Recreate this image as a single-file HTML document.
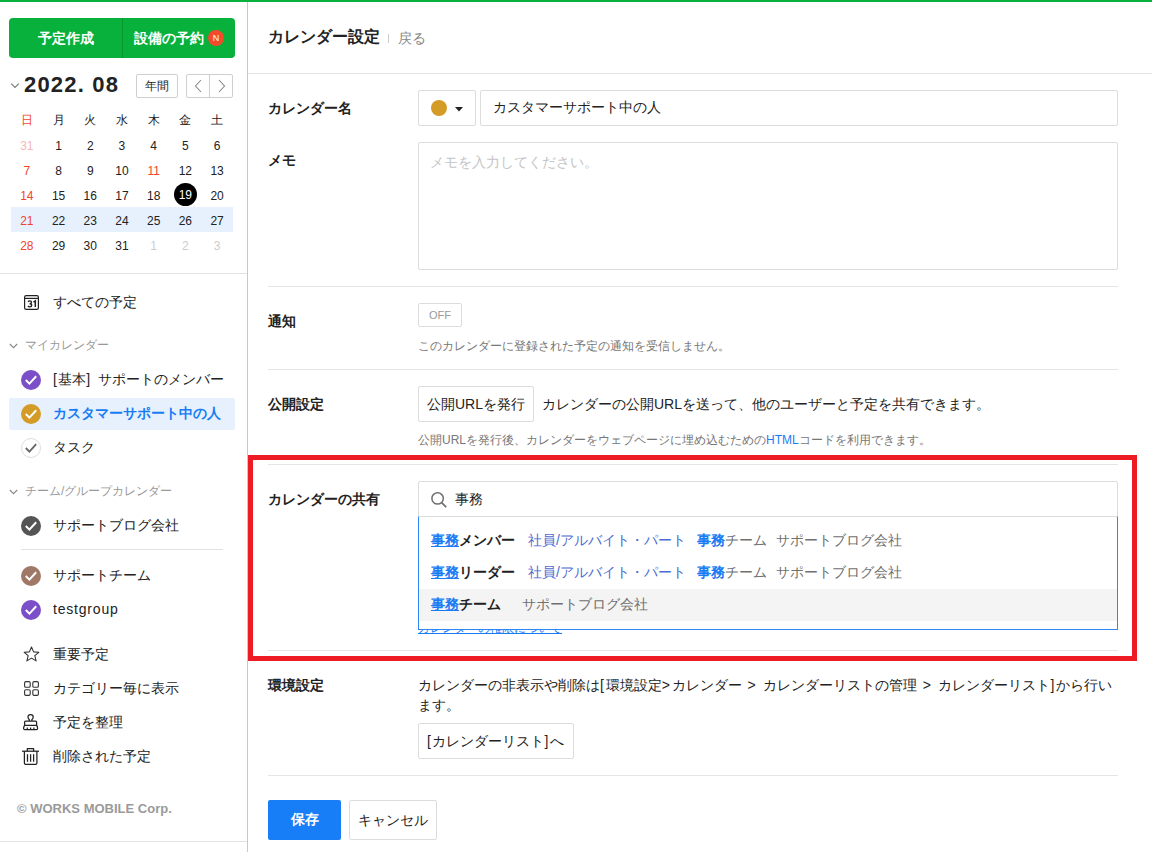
<!DOCTYPE html>
<html lang="ja">
<head>
<meta charset="utf-8">
<style>
*{box-sizing:border-box;margin:0;padding:0}
html,body{width:1152px;height:852px;overflow:hidden;background:#fff}
body{position:relative;font-family:"Liberation Sans",sans-serif;color:#222;font-size:14px}
.a{position:absolute}
.topbar{left:0;top:0;width:1152px;height:2px;background:#08b13b}
.sideborder{left:247px;top:2px;width:1px;height:850px;background:#c9c9c9}
/* sidebar */
.btns{left:9px;top:18px;width:226px;height:40px;background:#08b13b;border-radius:4px}
.btns .div{left:113px;top:0;width:1px;height:40px;background:#06972f}
.btxt{color:#fff;font-weight:bold;font-size:14px;line-height:40px;white-space:nowrap}
.badge{left:199px;top:12px;width:16px;height:16px;border-radius:50%;background:#f44a2c;color:#fff;font-size:9px;line-height:16px;text-align:center}
.year{left:24px;top:72px;font-size:22px;font-weight:bold;line-height:26px;color:#222;white-space:nowrap;letter-spacing:1.2px}
.sbtn{border:1px solid #cfcfcf;border-radius:2px;background:#fff}
.cal{left:11px;top:107px;width:222px}
.cal .row{position:relative;height:25px;display:flex}
.cal .c{width:31.714px;text-align:center;line-height:25px;font-size:12px;color:#222;position:relative}
.cal .c{top:2px}
.cal .c.today{top:0}
.cal .row.h .c{top:1px}
.red{color:#f0452b !important}
.pink{color:#f7b9b3 !important}
.gry{color:#cdcdcd !important}
.wk{background:#e6f1fd}
.today{position:relative}
.today span{display:inline-block;width:23px;height:23px;border-radius:50%;background:#000;color:#fff;line-height:25px;vertical-align:top;margin-top:1px}
.hr{height:1px;background:#e2e2e2}
.item{left:9px;width:226px;height:32px}
.item .t{position:absolute;left:44px;top:-1px;line-height:32px;font-size:14px;white-space:nowrap;color:#222}
.chk{position:absolute;left:12px;top:6px;width:20px;height:20px;border-radius:50%}
.chk svg{position:absolute;left:0;top:0}
.sec{left:25px;font-size:12px;color:#999;line-height:20px;white-space:nowrap}
.secchev{left:9px}
.menu{left:53px;font-size:14px;line-height:20px;white-space:nowrap;color:#222}
/* main */
.hdr{left:268px;top:26px;font-size:16px;font-weight:bold;line-height:22px;white-space:nowrap}
.back{left:398px;top:27px;font-size:14px;color:#888;line-height:22px}
.lbl{left:268px;font-size:14px;font-weight:bold;line-height:20px;white-space:nowrap}
.box{border:1px solid #dcdcdc;border-radius:2px;background:#fff}
.ln{left:268px;width:850px;height:1px;background:#e5e5e5}
.txt{font-size:14px;line-height:20px;white-space:nowrap;color:#222}
.help{font-size:12px;line-height:18px;white-space:nowrap;color:#777}
.ls{letter-spacing:1.8px}
</style>
</head>
<body>
<div class="a topbar"></div>
<div class="a sideborder"></div>

<!-- sidebar buttons -->
<div class="a btns">
  <div class="a div"></div>
  <div class="a btxt" style="left:29px;top:0">予定作成</div>
  <div class="a btxt" style="left:125px;top:0">設備の予約</div>
  <div class="a badge">N</div>
</div>

<!-- year header -->
<svg class="a" style="left:10px;top:82px" width="10" height="7" viewBox="0 0 10 7"><path d="M1.2 1.6 L5 5.4 L8.8 1.6" fill="none" stroke="#777" stroke-width="1.1"/></svg>
<div class="a year">2022. 08</div>
<div class="a sbtn" style="left:136px;top:74px;width:42px;height:24px;font-size:12px;line-height:22px;text-align:center">年間</div>
<div class="a sbtn" style="left:186px;top:74px;width:47px;height:24px"></div>
<div class="a" style="left:209px;top:75px;width:1px;height:22px;background:#cfcfcf"></div>
<svg class="a" style="left:193px;top:79px" width="10" height="14" viewBox="0 0 10 14"><path d="M8 1 L2.5 7 L8 13" fill="none" stroke="#888" stroke-width="1.1"/></svg>
<svg class="a" style="left:217px;top:79px" width="10" height="14" viewBox="0 0 10 14"><path d="M2 1 L7.5 7 L2 13" fill="none" stroke="#888" stroke-width="1.1"/></svg>

<!-- mini calendar -->
<div class="a cal">
  <div class="row h"><div class="c red">日</div><div class="c">月</div><div class="c">火</div><div class="c">水</div><div class="c">木</div><div class="c">金</div><div class="c">土</div></div>
  <div class="row"><div class="c pink">31</div><div class="c">1</div><div class="c">2</div><div class="c">3</div><div class="c">4</div><div class="c">5</div><div class="c">6</div></div>
  <div class="row"><div class="c red">7</div><div class="c">8</div><div class="c">9</div><div class="c">10</div><div class="c red">11</div><div class="c">12</div><div class="c">13</div></div>
  <div class="row"><div class="c red">14</div><div class="c">15</div><div class="c">16</div><div class="c">17</div><div class="c">18</div><div class="c today"><span>19</span></div><div class="c">20</div></div>
  <div class="row wk"><div class="c red">21</div><div class="c">22</div><div class="c">23</div><div class="c">24</div><div class="c">25</div><div class="c">26</div><div class="c">27</div></div>
  <div class="row"><div class="c red">28</div><div class="c">29</div><div class="c">30</div><div class="c">31</div><div class="c gry">1</div><div class="c gry">2</div><div class="c gry">3</div></div>
</div>
<div class="a hr" style="left:0;top:273px;width:247px"></div>


<!-- all schedules -->
<svg class="a" style="left:24px;top:295px" width="15" height="15" viewBox="0 0 15 15"><rect x="0.6" y="0.6" width="13.8" height="13.8" rx="1.6" fill="none" stroke="#222" stroke-width="1.2"/><line x1="0.6" y1="3.4" x2="14.4" y2="3.4" stroke="#222" stroke-width="1.2"/><path d="M4.1 6.9 Q4.6 5.9 5.9 5.9 Q7.5 5.9 7.5 7.3 Q7.5 8.7 5.6 8.7 Q7.7 8.7 7.7 10.3 Q7.7 11.8 5.9 11.8 Q4.5 11.8 3.9 10.9" fill="none" stroke="#222" stroke-width="1.35"/><path d="M9.5 7.2 L11.3 6 V12" fill="none" stroke="#222" stroke-width="1.5"/></svg>
<div class="a menu" style="top:292px">すべての予定</div>

<svg class="a secchev" style="top:343px" width="9" height="6" viewBox="0 0 9 6"><path d="M0.8 1 L4.5 4.7 L8.2 1" fill="none" stroke="#888" stroke-width="1.1"/></svg>
<div class="a sec" style="top:335px">マイカレンダー</div>

<div class="a item" style="top:364px"><div class="chk" style="background:#7b4fc8"><svg width="20" height="20" viewBox="0 0 20 20"><path d="M4.8 10 L8.4 13.6 L15.2 6.2" fill="none" stroke="#fff" stroke-width="2"/></svg></div><div class="t"><span style="letter-spacing:1.3px">[</span>基本<span style="letter-spacing:2px">] </span>サポートのメンバー</div></div>
<div class="a item" style="top:398px;background:#e6f1fd;border-radius:2px"><div class="chk" style="background:#d49b26"><svg width="20" height="20" viewBox="0 0 20 20"><path d="M4.8 10 L8.4 13.6 L15.2 6.2" fill="none" stroke="#fff" stroke-width="2"/></svg></div><div class="t" style="color:#1a7cf5;font-weight:bold">カスタマーサポート中の人</div></div>
<div class="a item" style="top:432px"><div class="chk" style="border:1px solid #ddd"><svg width="18" height="18" viewBox="0 0 18 18"><path d="M3.8 9 L7.4 12.6 L14.2 5.2" fill="none" stroke="#666" stroke-width="1.8"/></svg></div><div class="t">タスク</div></div>

<svg class="a secchev" style="top:489px" width="9" height="6" viewBox="0 0 9 6"><path d="M0.8 1 L4.5 4.7 L8.2 1" fill="none" stroke="#888" stroke-width="1.1"/></svg>
<div class="a sec" style="top:481px">チーム/グループカレンダー</div>

<div class="a item" style="top:510px"><div class="chk" style="background:#555"><svg width="20" height="20" viewBox="0 0 20 20"><path d="M4.8 10 L8.4 13.6 L15.2 6.2" fill="none" stroke="#fff" stroke-width="2"/></svg></div><div class="t">サポートブログ会社</div></div>
<div class="a hr" style="left:21px;top:549px;width:202px"></div>
<div class="a item" style="top:560px"><div class="chk" style="background:#a07868"><svg width="20" height="20" viewBox="0 0 20 20"><path d="M4.8 10 L8.4 13.6 L15.2 6.2" fill="none" stroke="#fff" stroke-width="2"/></svg></div><div class="t">サポートチーム</div></div>
<div class="a item" style="top:594px"><div class="chk" style="background:#7b4fc8"><svg width="20" height="20" viewBox="0 0 20 20"><path d="M4.8 10 L8.4 13.6 L15.2 6.2" fill="none" stroke="#fff" stroke-width="2"/></svg></div><div class="t" style="letter-spacing:0.8px">testgroup</div></div>

<svg class="a" style="left:23px;top:646px" width="17" height="17" viewBox="0 0 17 17"><path d="M8.5 1 L10.6 5.9 L15.8 6.3 L11.8 9.7 L13.1 14.9 L8.5 12.1 L3.9 14.9 L5.2 9.7 L1.2 6.3 L6.4 5.9 Z" fill="none" stroke="#333" stroke-width="1.1" stroke-linejoin="round"/></svg>
<div class="a menu" style="top:644px">重要予定</div>
<svg class="a" style="left:24px;top:681px" width="15" height="15" viewBox="0 0 15 15"><rect x="0.6" y="0.6" width="5.6" height="5.6" rx="1.3" fill="none" stroke="#333" stroke-width="1.1"/><rect x="8.8" y="0.6" width="5.6" height="5.6" rx="1.3" fill="none" stroke="#333" stroke-width="1.1"/><rect x="0.6" y="8.8" width="5.6" height="5.6" rx="1.3" fill="none" stroke="#333" stroke-width="1.1"/><rect x="8.8" y="8.8" width="5.6" height="5.6" rx="1.3" fill="none" stroke="#333" stroke-width="1.1"/></svg>
<div class="a menu" style="top:678px">カテゴリー毎に表示</div>
<svg class="a" style="left:23px;top:714px" width="16" height="17" viewBox="0 0 16 17"><g fill="none" stroke="#222" stroke-width="1.25" stroke-linejoin="round"><path d="M6.3 7 V5.6 Q5 4.8 5 3 Q5 0.7 7.6 0.7 Q10.2 0.7 10.2 3 Q10.2 4.8 8.9 5.6 V7"/><path d="M1.6 11.4 V8 Q1.6 7 2.6 7 H12.6 Q13.6 7 13.6 8 V11.4 Z"/><path d="M1.6 11.4 Q0.6 12.2 0.6 14.4 Q0.6 15.6 1.8 15.6 H13.4 Q14.6 15.6 14.6 14.4 Q14.6 12.2 13.6 11.4"/></g><path d="M4.3 13.6 V15.6 M7.6 13.6 V15.6 M10.9 13.6 V15.6" stroke="#222" stroke-width="1.2"/></svg>
<div class="a menu" style="top:712px">予定を整理</div>
<svg class="a" style="left:22px;top:748px" width="17" height="17" viewBox="0 0 17 17"><g fill="none" stroke="#222" stroke-width="1.25" stroke-linejoin="round"><path d="M0 3.2 H17"/><path d="M5.3 3.2 V0.7 H11.6 V3.2"/><path d="M2.4 3.2 V15 Q2.4 16.3 3.7 16.3 H13.6 Q14.9 16.3 14.9 15 V3.2"/><path d="M5.5 6.2 V13.8 M8.6 6.2 V13.8 M11.6 6.2 V13.8"/></g></svg>
<div class="a menu" style="top:746px">削除された予定</div>

<div class="a" style="left:17px;top:800px;font-size:13px;font-weight:bold;color:#9a9a9a;line-height:18px;white-space:nowrap">© WORKS MOBILE Corp.</div>
<div class="a hr" style="left:0;top:841px;width:247px"></div>



<!-- header -->
<div class="a hdr">カレンダー設定</div>
<div class="a" style="left:388px;top:34px;width:1px;height:9px;background:#ccc"></div>
<div class="a back">戻る</div>
<div class="a" style="left:248px;top:73px;width:904px;height:1px;background:#e2e2e2"></div>

<!-- calendar name -->
<div class="a lbl" style="top:98px">カレンダー名</div>
<div class="a box" style="left:418px;top:90px;width:58px;height:36px"></div>
<div class="a" style="left:431px;top:100px;width:16px;height:16px;border-radius:50%;background:#d49b26"></div>
<svg class="a" style="left:455px;top:107px" width="8" height="5" viewBox="0 0 8 5"><path d="M0 0 L8 0 L4 4.5 Z" fill="#222"/></svg>
<div class="a box" style="left:480px;top:90px;width:638px;height:36px"></div>
<div class="a txt" style="left:493px;top:97px">カスタマーサポート中の人</div>

<!-- memo -->
<div class="a lbl" style="top:150px">メモ</div>
<div class="a box" style="left:418px;top:142px;width:700px;height:128px"></div>
<div class="a txt" style="left:430px;top:152px;color:#c4c4c4">メモを入力してください。</div>
<div class="a ln" style="top:286px"></div>

<!-- notification -->
<div class="a lbl" style="top:311px">通知</div>
<div class="a box" style="left:418px;top:303px;width:44px;height:24px;font-size:11px;color:#999;text-align:center;line-height:22px">OFF</div>
<div class="a help" style="left:418px;top:337px">このカレンダーに登録された予定の通知を受信しません。</div>
<div class="a ln" style="top:369px"></div>

<!-- public -->
<div class="a lbl" style="top:394px">公開設定</div>
<div class="a box" style="left:418px;top:386px;width:116px;height:36px"></div>
<div class="a txt" style="left:427px;top:394px">公開URLを発行</div>
<div class="a txt" style="left:542px;top:394px">カレンダーの公開URLを送って、他のユーザーと予定を共有できます。</div>
<div class="a help" style="left:418px;top:431px">公開URLを発行後、カレンダーをウェブページに埋め込むための<span style="color:#1a7cf5">HTML</span>コードを利用できます。</div>
<div class="a ln" style="top:464px"></div>

<!-- share -->
<div class="a lbl" style="top:489px">カレンダーの共有</div>
<div class="a box" style="left:418px;top:481px;width:700px;height:36px;border-radius:2px 2px 0 0"></div>
<svg class="a" style="left:430px;top:491px" width="18" height="18" viewBox="0 0 18 18"><circle cx="7.6" cy="7.4" r="5.7" fill="none" stroke="#707070" stroke-width="1.5"/><path d="M11.6 11.6 L16.2 16.2" stroke="#707070" stroke-width="1.7"/></svg>
<div class="a txt" style="left:455px;top:489px">事務</div>
<div class="a" style="left:418px;top:629px;font-size:12px;color:#1a7cf5;text-decoration:underline;line-height:14px;white-space:nowrap;overflow:hidden;height:6px"><div style="margin-top:-8px">カレンダーの権限について</div></div>
<div class="a" style="left:418px;top:516px;width:700px;height:114px;border:1px solid #2f86f6;border-top:1px solid #dcdcdc;background:#fff"></div>
<div class="a" style="left:419px;top:589px;width:698px;height:32px;background:#f4f4f4"></div>
<div class="a txt" style="left:431px;top:530px"><b style="color:#1a7cf5;text-decoration:underline">事務</b><b>メンバー</b></div>
<div class="a txt" style="left:528px;top:530px;color:#4e6ad0">社員/アルバイト・パート</div>
<div class="a txt" style="left:697px;top:530px;color:#6f6f6f"><b style="color:#1a7cf5">事務</b>チーム</div>
<div class="a txt" style="left:776px;top:530px;color:#6f6f6f">サポートブログ会社</div>
<div class="a txt" style="left:431px;top:562px"><b style="color:#1a7cf5;text-decoration:underline">事務</b><b>リーダー</b></div>
<div class="a txt" style="left:528px;top:562px;color:#4e6ad0">社員/アルバイト・パート</div>
<div class="a txt" style="left:697px;top:562px;color:#6f6f6f"><b style="color:#1a7cf5">事務</b>チーム</div>
<div class="a txt" style="left:776px;top:562px;color:#6f6f6f">サポートブログ会社</div>
<div class="a txt" style="left:431px;top:594px"><b style="color:#1a7cf5;text-decoration:underline">事務</b><b>チーム</b></div>
<div class="a txt" style="left:522px;top:594px;color:#6f6f6f">サポートブログ会社</div>
<div class="a ln" style="top:650px"></div>

<!-- red highlight box -->
<div class="a" style="left:248px;top:455px;width:889px;height:206px;border:5px solid #ed1c24"></div>

<!-- environment -->
<div class="a lbl" style="top:675px">環境設定</div>
<div class="a txt" style="left:418px;top:675px;white-space:normal;width:700px">カレンダーの非表示や削除は<span class="ls">[</span>環境設定<span class="ls">&gt;</span>カレンダー<span class="ls"> &gt; </span>カレンダーリストの管理<span class="ls"> &gt; </span>カレンダーリスト<span class="ls">]</span>から行い<br>ます。</div>
<div class="a box" style="left:418px;top:723px;width:156px;height:36px"></div>
<div class="a txt" style="left:427px;top:731px"><span style="letter-spacing:1.5px">[</span>カレンダーリスト<span style="letter-spacing:1.8px">]</span>へ</div>
<div class="a ln" style="top:775px"></div>

<!-- footer buttons -->
<div class="a" style="left:268px;top:800px;width:73px;height:40px;background:#177ef8;border-radius:2px;color:#fff;font-weight:bold;text-align:center;line-height:38px">保存</div>
<div class="a box" style="left:349px;top:800px;width:88px;height:40px;text-align:center;line-height:38px">キャンセル</div>


</body>
</html>
